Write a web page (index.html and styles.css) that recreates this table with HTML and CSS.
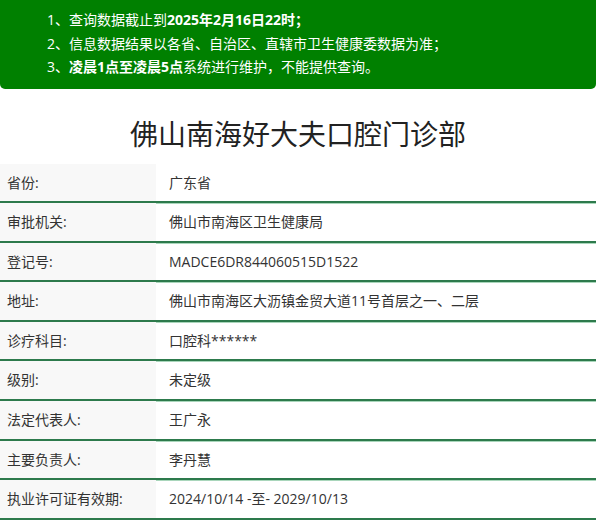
FILE: index.html
```html
<!DOCTYPE html>
<html lang="zh-CN">
<head>
<meta charset="utf-8">
<title>佛山南海好大夫口腔门诊部</title>
<link rel="stylesheet" href="styles.css">
</head>
<body>
<div class="page">
  <div class="notice">
    <p>1、查询数据截止到<b>2025年2月16日22时；</b></p>
    <p>2、信息数据结果以各省、自治区、直辖市卫生健康委数据为准；</p>
    <p>3、<b>凌晨1点至凌晨5点</b>系统进行维护，不能提供查询。</p>
  </div>
  <h1 class="title">佛山南海好大夫口腔门诊部</h1>
  <div class="info">
    <div class="row"><div class="label">省份:</div><div class="value">广东省</div></div>
    <div class="row"><div class="label">审批机关:</div><div class="value">佛山市南海区卫生健康局</div></div>
    <div class="row"><div class="label">登记号:</div><div class="value">MADCE6DR844060515D1522</div></div>
    <div class="row"><div class="label">地址:</div><div class="value">佛山市南海区大沥镇金贸大道11号首层之一、二层</div></div>
    <div class="row"><div class="label">诊疗科目:</div><div class="value">口腔科******</div></div>
    <div class="row"><div class="label">级别:</div><div class="value">未定级</div></div>
    <div class="row"><div class="label">法定代表人:</div><div class="value">王广永</div></div>
    <div class="row"><div class="label">主要负责人:</div><div class="value">李丹慧</div></div>
    <div class="row"><div class="label">执业许可证有效期:</div><div class="value">2024/10/14 -至- 2029/10/13</div></div>
  </div>
</div>
</body>
</html>
```

FILE: styles.css
```css
html, body {
  margin: 0;
  padding: 0;
  background: #ffffff;
}
body {
  font-family: "Open Sans", "Noto Sans CJK SC", sans-serif;
  color: #333333;
  font-size: 14px;
}
.page {
  width: 596px;
}
.notice {
  background: #008000;
  color: #ffffff;
  border-radius: 0 0 5px 5px;
  padding: 8px 0 10px 47px;
}
.notice p {
  margin: 0;
  line-height: 23.5px;
  font-size: 14px;
}
.notice b {
  font-weight: 700;
}
.title {
  margin: 0;
  height: 75px;
  line-height: 88px;
  box-sizing: border-box;
  padding-bottom: 16px;
  text-align: center;
  font-size: 28px;
  font-weight: 400;
  color: #222222;
  line-height: 59px;
  padding-top: 16px;
}
.info {
  display: flex;
  flex-direction: column;
}
.row {
  display: grid;
  grid-template-columns: 156px 1fr;
  border-bottom: 2px solid #2d7a4c;
  box-shadow: 0 1px 0 #a9d6bb;
}
.label {
  background: #f8f8f8;
  padding-left: 7px;
  height: 37.6px;
  line-height: 37.6px;
}
.value {
  padding-left: 13px;
  height: 37.6px;
  line-height: 37.6px;
}
```
